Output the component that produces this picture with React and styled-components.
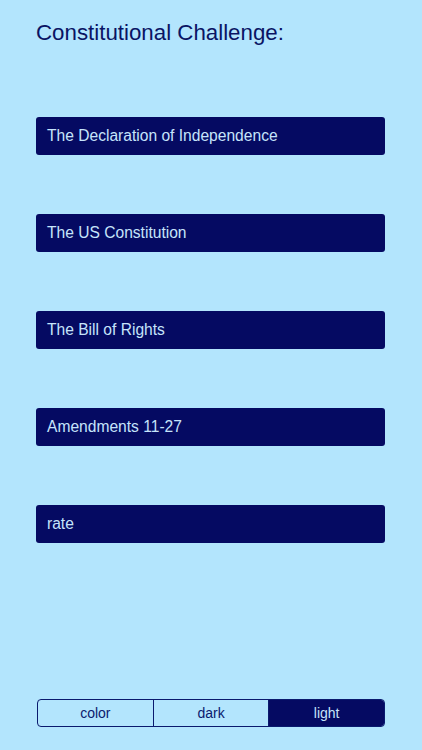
import React, { useState } from "react";
import styled, { createGlobalStyle } from "styled-components";

const GlobalStyle = createGlobalStyle`
  html, body {
    margin: 0;
    padding: 0;
    background: #b3e5fd;
    font-family: "Liberation Sans", Arial, sans-serif;
  }
`;

const Screen = styled.main`
  box-sizing: border-box;
  height: 750px;
  padding: 19px 37px 23px 36px;
  display: flex;
  flex-direction: column;
`;

const Title = styled.h1`
  margin: 0;
  font-size: 22.3px;
  font-weight: 400;
  color: #0a1464;
  line-height: 28px;
`;

const Menu = styled.nav`
  margin-top: 70px;
  display: flex;
  flex-direction: column;
  gap: 59px;
`;

const MenuButton = styled.button`
  height: 38px;
  border: none;
  border-radius: 3px;
  background: #050a62;
  color: #c6e4fb;
  font-family: inherit;
  font-size: 15.6px;
  text-align: left;
  padding: 0 0 0 11px;
  cursor: pointer;
`;

const Segmented = styled.div`
  margin-top: auto;
  margin-left: 1px;
  display: flex;
  height: 26px;
  border: 1px solid #0a1a6e;
  border-radius: 4px;
  overflow: hidden;
`;

const Segment = styled.button`
  flex: 1;
  border: none;
  border-left: 1px solid #0a1a6e;
  &:first-child { border-left: none; }
  background: ${(p) => (p.$active ? "#050a62" : "transparent")};
  color: ${(p) => (p.$active ? "#c6e4fb" : "#0a1a6e")};
  font-family: inherit;
  font-size: 14px;
  padding: 0;
  cursor: pointer;
`;

const items = [
  "The Declaration of Independence",
  "The US Constitution",
  "The Bill of Rights",
  "Amendments 11-27",
  "rate",
];

const themes = ["color", "dark", "light"];

export default function App() {
  const [theme, setTheme] = useState("light");
  return (
    <>
      <GlobalStyle />
      <Screen>
        <Title>Constitutional Challenge:</Title>
        <Menu>
          {items.map((item) => (
            <MenuButton key={item}>{item}</MenuButton>
          ))}
        </Menu>
        <Segmented>
          {themes.map((t) => (
            <Segment key={t} $active={theme === t} onClick={() => setTheme(t)}>
              {t}
            </Segment>
          ))}
        </Segmented>
      </Screen>
    </>
  );
}
